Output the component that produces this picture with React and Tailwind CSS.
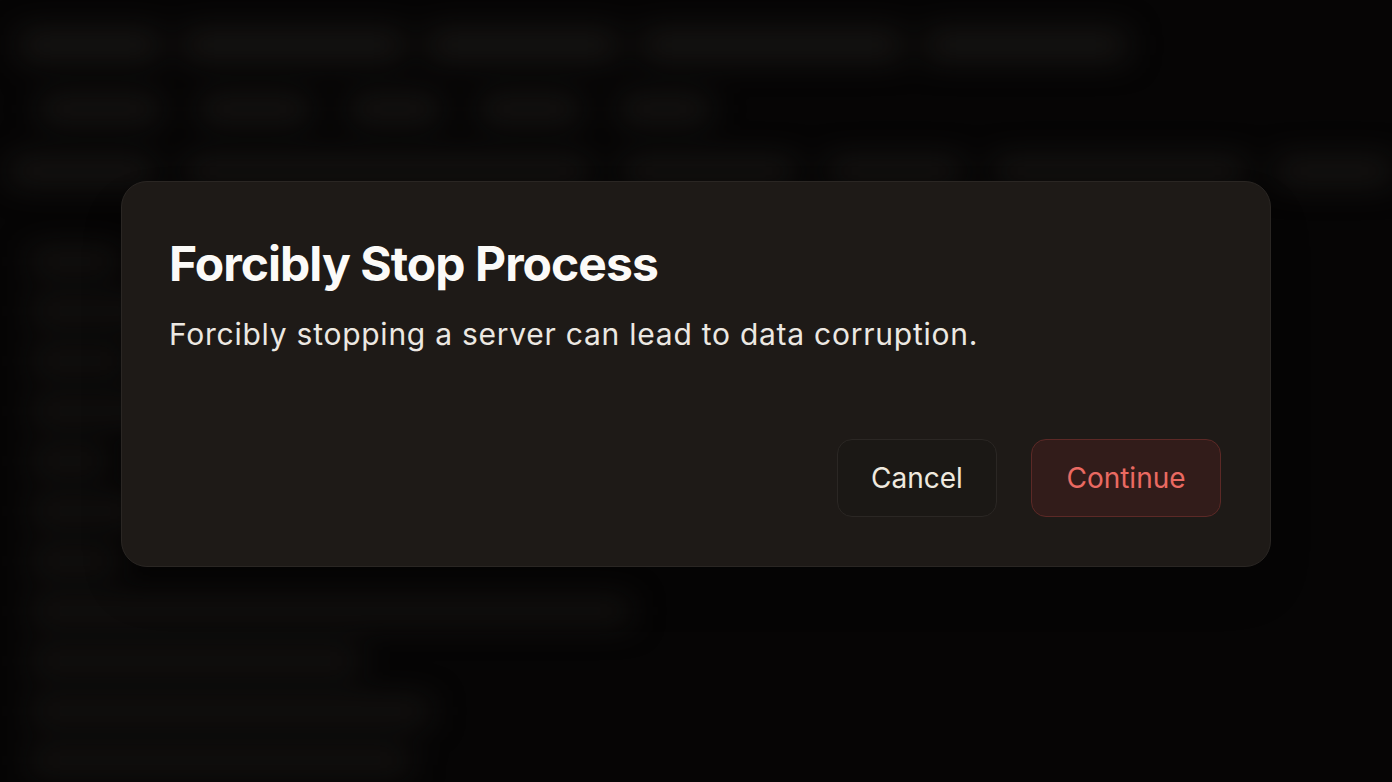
import React from 'react';

const rows = [
  { pl: 'pl-[20px]', items: ['w-[140px]', 'w-[220px]', 'w-[190px]', 'w-[260px]', 'w-[200px]'], gap: 'gap-6', h: 'h-[26px]' },
  { pl: 'pl-[40px]', items: ['w-[120px]', 'w-[110px]', 'w-[90px]', 'w-[100px]', 'w-[90px]'], gap: 'gap-10', h: 'h-[22px]' },
  { pl: 'pl-[10px]', items: ['w-[150px]', 'w-[420px]', 'w-[180px]', 'w-[140px]', 'w-[260px]', 'w-[120px]'], gap: 'gap-8', h: 'h-[22px]' },
];

const sideRows = [
  'w-[90px]', 'w-[120px]', 'w-[100px]', 'w-[130px]', 'w-[80px]', 'w-[110px]', 'w-[90px]', 'w-[600px]',
  'w-[330px]', 'w-[400px]', 'w-[380px]',
];

const Backdrop = () => (
  <div className="flex flex-col blur-lg">
    {rows.map((r, i) => (
      <div key={i} className={`flex items-center ${r.pl} ${r.gap} pt-[32px] pb-[8px]`}>
        {r.items.map((w, j) => (
          <div key={j} className={`${w} ${r.h} rounded bg-[#1a1816]`} />
        ))}
      </div>
    ))}
    <div className="flex flex-col gap-[28px] pl-[30px] pt-[60px]">
      {sideRows.map((w, i) => (
        <div key={i} className={`${w} h-[22px] rounded bg-[#171513]`} />
      ))}
    </div>
  </div>
);

export default function App() {
  return (
    <div
      className="relative h-[782px] w-full overflow-hidden bg-[#060505]"
      style={{ fontFamily: 'Inter, "Noto Sans", sans-serif' }}
    >
      <Backdrop />

      <div className="absolute inset-0 flex justify-center pt-[181px]">
        <div className="flex h-[386px] w-[1150px] flex-col rounded-[26px] border border-[#2a2623] bg-[#1e1a17] pl-[47px] pr-[49px] pt-[53px] pb-[49px] shadow-2xl">
          <h2 className="text-[48px] font-bold leading-[1.2] tracking-[-0.02em] text-[#fbfaf8]">
            Forcibly Stop Process
          </h2>
          <p className="mt-[20px] text-[30px] leading-[1.4] tracking-[0.025em] text-[#ece8e2]">
            Forcibly stopping a server can lead to data corruption.
          </p>
          <div className="mt-auto flex justify-end gap-[34px]">
            <button className="h-[78px] w-[160px] rounded-[15px] border border-[#2b2724] bg-[#1b1815] text-[28px] text-[#efe9df]">
              Cancel
            </button>
            <button className="h-[78px] w-[190px] rounded-[15px] border border-[#5c2926] bg-[#321c1a] text-[28px] text-[#ea6a62]">
              Continue
            </button>
          </div>
        </div>
      </div>
    </div>
  );
}
